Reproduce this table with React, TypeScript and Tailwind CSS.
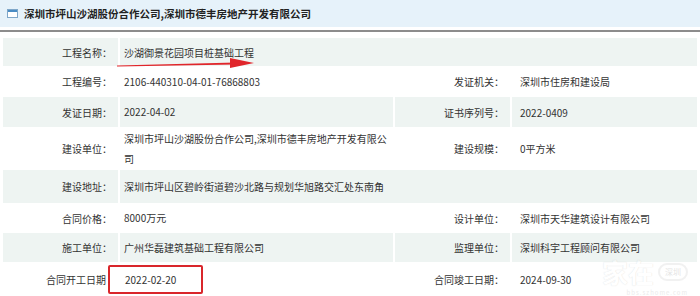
import React from 'react';

const font = { fontFamily: '"Microsoft YaHei", "Noto Sans CJK SC", "Liberation Sans", sans-serif' };

interface Cell {
    label: string;
    value: React.ReactNode;
}

interface Row {
    left: Cell;
    right?: Cell;
    h: string;
    shade: boolean;
}

const rows: Row[] = [
    { left: { label: '工程名称：', value: '沙湖御景花园项目桩基础工程' }, h: 'h-[28px]', shade: true },
    { left: { label: '工程编号：', value: '2106-440310-04-01-76868803' }, right: { label: '发证机关：', value: '深圳市住房和建设局' }, h: 'h-[31px]', shade: false },
    { left: { label: '发证日期：', value: '2022-04-02' }, right: { label: '证书序列号：', value: '2022-0409' }, h: 'h-[30px]', shade: true },
    { left: { label: '建设单位：', value: '深圳市坪山沙湖股份合作公司,深圳市德丰房地产开发有限公司' }, right: { label: '建设规模：', value: '0平方米' }, h: 'h-[43px]', shade: false },
    { left: { label: '建设地址：', value: '深圳市坪山区碧岭街道碧沙北路与规划华旭路交汇处东南角' }, h: 'h-[33px]', shade: true },
    { left: { label: '合同价格：', value: '8000万元' }, right: { label: '设计单位：', value: '深圳市天华建筑设计有限公司' }, h: 'h-[30px]', shade: false },
    { left: { label: '施工单位：', value: '广州华磊建筑基础工程有限公司' }, right: { label: '监理单位：', value: '深圳科宇工程顾问有限公司' }, h: 'h-[29px]', shade: true },
];

const App: React.FC = () => {
    return (
        <div className="w-[700px] h-[296px] bg-white text-[#333] overflow-hidden relative" style={font}>
            {/* header */}
            <div className="h-[27px] bg-[#e6f2fa] flex items-center pl-[7px] gap-[6px]">
                <div className="w-[11px] h-[9px] border border-[#7fa7c9] bg-white flex flex-col">
                    <div className="h-[2px] bg-[#4a8cc4]" />
                </div>
                <span className="text-[10.5px] font-bold text-[#222]">深圳市坪山沙湖股份合作公司,深圳市德丰房地产开发有限公司</span>
            </div>
            <div className="mt-[3px] h-[2px] bg-[#8c8c8c]" />

            <table className="mt-[6px] ml-[1px] w-[698px] table-fixed border-separate border-spacing-x-[2px] border-spacing-y-0 text-[10px]">
                <colgroup>
                    <col className="w-[115px]" />
                    <col className="w-[273px]" />
                    <col className="w-[115px]" />
                    <col />
                </colgroup>
                <tbody>
                    {rows.map((r, i) => (
                        <tr key={i} className={`${r.h} ${r.shade ? 'bg-[#eef4f2]' : ''}`}>
                            <td className="text-right pr-[6px] align-middle">{r.left.label}</td>
                            {r.right ? (
                                <>
                                    <td className="pl-[4px] pr-[3px] leading-[20px] align-middle">{r.left.value}</td>
                                    <td className="text-right pr-[6px] align-middle">{r.right.label}</td>
                                    <td className="pl-[8px] align-middle">{r.right.value}</td>
                                </>
                            ) : (
                                <td colSpan={3} className="pl-[4px] align-middle">{r.left.value}</td>
                            )}
                        </tr>
                    ))}
                    <tr className="h-[34px]">
                        <td className="text-right pr-[12px] align-middle">合同开工日期</td>
                        <td className="align-middle">
                            <span className="inline-flex items-center h-[29px] w-[95px] -ml-[12px] pl-[15px] border-2 border-[#d9262b] rounded-[2px]">2022-02-20</span>
                        </td>
                        <td className="text-right pr-[6px] align-middle">合同竣工日期：</td>
                        <td className="pl-[8px] align-middle">2024-09-30</td>
                    </tr>
                </tbody>
            </table>

            {/* red arrow under project name */}
            <svg className="absolute left-[116px] top-[56px]" width="142" height="14" viewBox="0 0 142 14">
                <path d="M1 9.5 L120 6.5 L120 8.5 L1 10.5 Z" fill="#e0262b" />
                <path d="M114 2 L138 7 L114 12 Z" fill="#e0262b" />
            </svg>

            {/* watermark */}
            <div className="absolute right-[12px] bottom-[0px] flex flex-col items-end opacity-40 pointer-events-none">
                <div className="flex items-center gap-[4px]">
                    <span className="text-[26px] leading-[26px] text-white font-bold" style={{ textShadow: '0 0 1px #aaa' }}>家在</span>
                    <span className="text-[8px] text-[#bbb] border-2 border-[#ddd] rounded-full px-[5px] py-[1px] bg-white">深圳</span>
                </div>
                <span className="mt-[4px] text-[6px] leading-[7px] text-[#ccc] tracking-[1px]">bbs.szhome.com</span>
            </div>
        </div>
    );
};

export default App;
